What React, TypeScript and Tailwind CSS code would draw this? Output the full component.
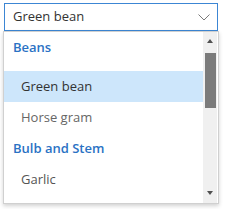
const font = { fontFamily: '"Open Sans", "Noto Sans", sans-serif' }

export default function App() {
  return (
    <div className="relative w-[240px] h-[209px] bg-white text-[13px]" style={font}>
      {/* Input */}
      <div className="absolute left-[4px] top-[3px] w-[214px] h-[28px] border border-[#3c86d4] bg-white flex items-center pl-[8px] pr-[7px]">
        <span className="flex-1 text-[#333]">Green bean</span>
        <svg width="12" height="7" viewBox="0 0 12 7" fill="none" stroke="#7a7a7a" strokeWidth="1">
          <path d="M0.5 0.5 L6 6 L11.5 0.5" />
        </svg>
      </div>

      {/* Popup */}
      <div className="absolute left-[3px] top-[31px] w-[216px] h-[173px] border border-[#d0d0d0] bg-white shadow-[0_2px_4px_rgba(0,0,0,0.18)] flex">
        <div className="flex-1 flex flex-col">
          <div className="h-[32px] flex items-center pl-[9px] font-semibold text-[#2a72c4]">Beans</div>
          <div className="h-[7px]" />
          <div className="h-[31px] flex items-center pl-[17px] bg-[#cde6fb] text-[#333]">Green bean</div>
          <div className="h-[32px] flex items-center pl-[17px] text-[#666]">Horse gram</div>
          <div className="h-[30px] flex items-center pl-[9px] font-semibold text-[#2a72c4]">Bulb and Stem</div>
          <div className="h-[32px] flex items-center pl-[17px] text-[#555]">Garlic</div>
        </div>
        {/* Scrollbar */}
        <div className="w-[14px] mr-[1px] bg-[#f0f0f0] flex flex-col items-center">
          <div className="h-[16px] flex items-center justify-center pt-[2px]">
            <div className="w-0 h-0 border-l-[3px] border-r-[3px] border-b-[4px] border-l-transparent border-r-transparent border-b-[#505050]" />
          </div>
          <div className="mt-[5px] w-[11px] h-[55px] bg-[#7b7b7b]" />
          <div className="flex-1" />
          <div className="h-[16px] flex items-center justify-center pb-[4px]">
            <div className="w-0 h-0 border-l-[3px] border-r-[3px] border-t-[4px] border-l-transparent border-r-transparent border-t-[#505050]" />
          </div>
        </div>
      </div>
    </div>
  )
}
